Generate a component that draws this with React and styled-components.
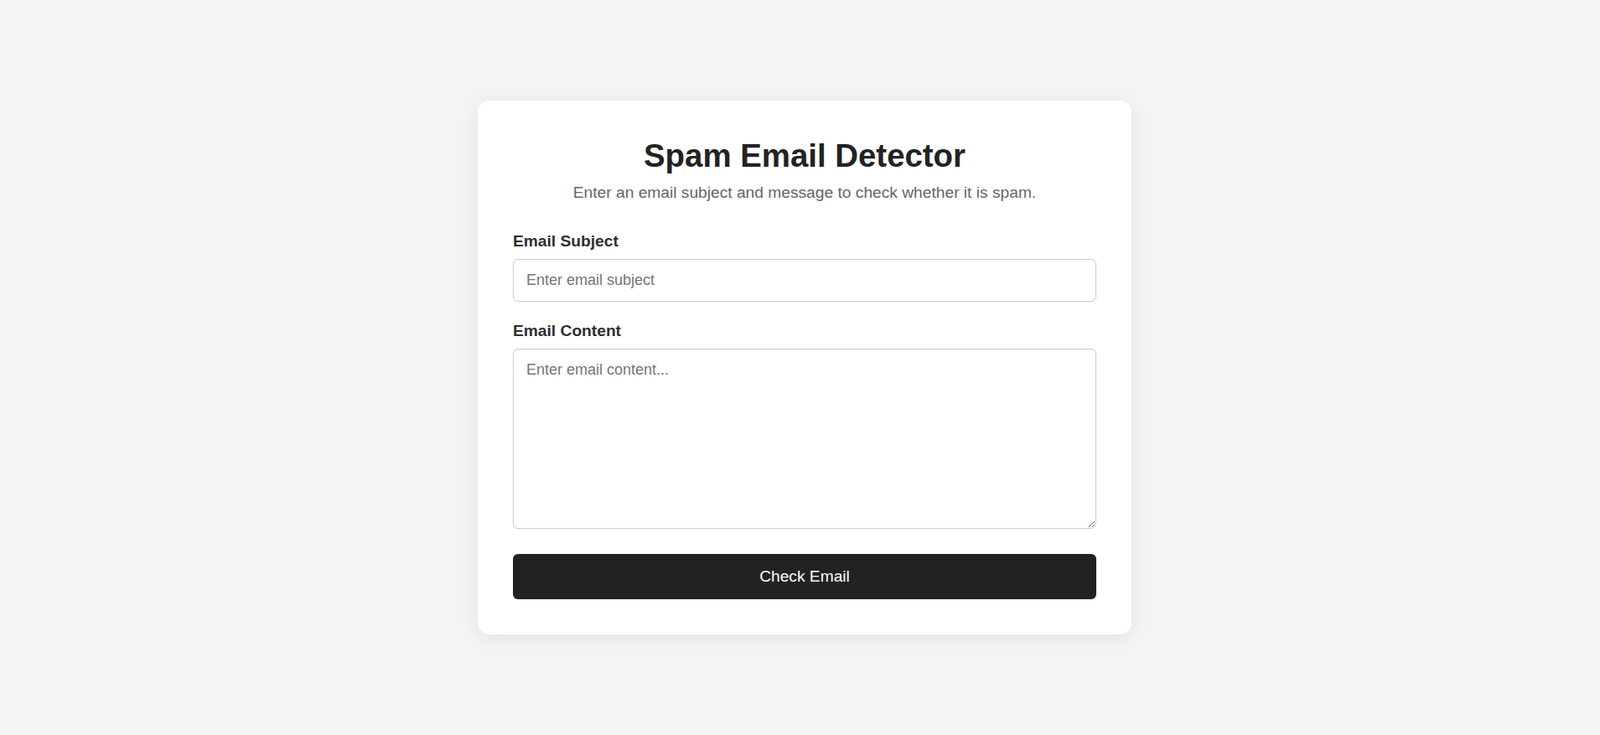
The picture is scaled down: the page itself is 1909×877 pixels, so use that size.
import React, { useState } from 'react'
import styled, { createGlobalStyle } from 'styled-components'

const GlobalStyle = createGlobalStyle`
    * {
        box-sizing: border-box;
    }

    body {
        margin: 0;
        font-family: "Liberation Sans", Arial, sans-serif;
        background: #f3f4f6;
    }
`

const Page = styled.div`
    min-height: 100vh;
    display: flex;
    align-items: center;
    justify-content: center;
    padding-left: 11px;
`

const Card = styled.form`
    width: 780px;
    padding: 42px;
    background: #fff;
    border-radius: 14px;
    box-shadow: 0 4px 24px rgba(0, 0, 0, 0.08);
`

const Title = styled.h1`
    margin: 0;
    font-size: 38.4px;
    line-height: 48px;
    font-weight: 700;
    color: #222;
    text-align: center;
`

const Subtitle = styled.p`
    margin: 9px 0 36px;
    font-size: 19.2px;
    color: #666;
    text-align: center;
`

const Label = styled.label`
    display: block;
    margin: ${({ first }) => (first ? '0' : '24px')} 0 10px;
    font-size: 19.2px;
    font-weight: 700;
    color: #2e2e2e;
`

const fieldStyles = `
    display: block;
    width: 100%;
    padding: 14px 15px;
    font-family: "Liberation Sans", Arial, sans-serif;
    font-size: 18px;
    color: #222;
    background: #fff;
    border: 1px solid #ccc;
    border-radius: 6px;
    outline: none;

    &::placeholder {
        color: #757575;
    }

    &:focus {
        border-color: #888;
    }
`

const Input = styled.input`
    ${fieldStyles}
`

const TextArea = styled.textarea`
    ${fieldStyles}
    height: 215px;
    resize: vertical;
`

const Button = styled.button`
    display: block;
    width: 100%;
    margin-top: 30px;
    padding: 16px;
    font-family: "Liberation Sans", Arial, sans-serif;
    font-size: 19.2px;
    line-height: 22px;
    color: #fff;
    background: #222;
    border: none;
    border-radius: 6px;
    cursor: pointer;

    &:hover {
        background: #000;
    }
`

const App = () => {

    const [subject, setSubject] = useState("")
    const [content, setContent] = useState("")

    return (
        <Page>
            <GlobalStyle />
            <Card onSubmit={(e) => e.preventDefault()}>
                <Title>Spam Email Detector</Title>
                <Subtitle>Enter an email subject and message to check whether it is spam.</Subtitle>

                <Label htmlFor='subject' first>Email Subject</Label>
                <Input
                    id='subject'
                    placeholder='Enter email subject'
                    value={subject}
                    onChange={(e) => setSubject(e.target.value)}
                />

                <Label htmlFor='content'>Email Content</Label>
                <TextArea
                    id='content'
                    placeholder='Enter email content...'
                    value={content}
                    onChange={(e) => setContent(e.target.value)}
                />

                <Button type='submit'>Check Email</Button>
            </Card>
        </Page>
    )
}

export default App
